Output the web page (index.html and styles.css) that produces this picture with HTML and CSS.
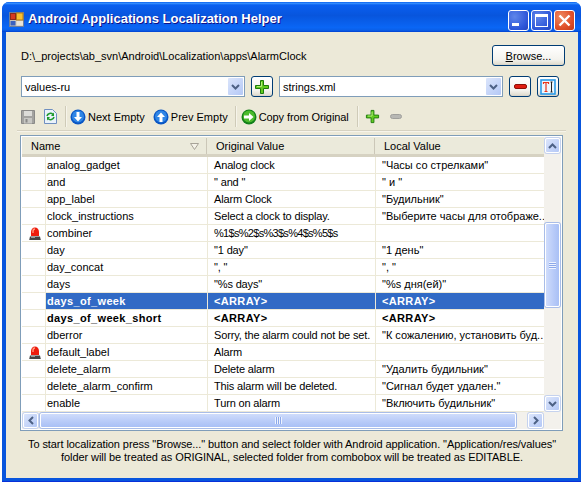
FILE: index.html
```html
<!DOCTYPE html>
<html lang="en">
<head>
    <meta charset="UTF-8" />
    <meta name="viewport" content="width=device-width, initial-scale=1" />
    <title>Android Applications Localization Helper</title>
    <link rel="stylesheet" href="styles.css">
</head>
<body>
    <svg class="defs" width="0" height="0">
        <defs>
            <symbol id="plus" viewBox="0 0 16 16">
                <path d="M6.500 1.500h3v5h5v3h-5v5h-3v-5h-5v-3h5z" fill="#62cc20" stroke="#1d7a0c"/>
                <path d="M7.500 3v4.500H3" fill="none" stroke="#b5ee7c"/>
            </symbol>
            <symbol id="beacon" viewBox="0 0 12 13">
                <path d="M2 9V5a4 4.500 0 0 1 8 0v4z" fill="#ee1c0c"/>
                <path d="M4 6V4.500a2 2.500 0 0 1 2-2.500" fill="none" stroke="#ff9a80" stroke-width="1.400"/>
                <path d="M1 9.500h10l.8 3.500H.2z" fill="#444"/>
                <path d="M2 10.500h4" stroke="#999"/>
            </symbol>
            <symbol id="arrow-down" viewBox="0 0 16 16">
                <circle cx="8" cy="8" r="7.500" fill="#0a56c4"/>
                <circle cx="8" cy="7.500" r="6" fill="#2f86e6"/>
                <path d="M6.500 3h3v5h2.500L8 12.500 4 8h2.500z" fill="#fff"/>
            </symbol>
            <symbol id="arrow-up" viewBox="0 0 16 16">
                <circle cx="8" cy="8" r="7.500" fill="#0a56c4"/>
                <circle cx="8" cy="7.500" r="6" fill="#2f86e6"/>
                <path d="M6.500 13h3V8h2.500L8 3.500 4 8h2.500z" fill="#fff"/>
            </symbol>
            <symbol id="arrow-right" viewBox="0 0 16 16">
                <circle cx="8" cy="8" r="7.500" fill="#12801a"/>
                <circle cx="8" cy="7.500" r="6" fill="#4cbb2c"/>
                <path d="M3 6.500h5V4l4.500 4L8 12V9.500H3z" fill="#fff"/>
            </symbol>
        </defs>
    </svg>

    <div class="window">
        <div class="titlebar">
            <svg class="app-icon" width="15" height="15" viewBox="0 0 15 15">
                <rect x="0.500" y="0.500" width="14" height="14" fill="#c8c4b8" stroke="#6d7f9c"/>
                <rect x="1.500" y="1.500" width="5" height="6" fill="#d83a20" stroke="#8e2a18"/>
                <rect x="7.500" y="1" width="6.500" height="7" fill="#f8c030" stroke="#b07a18"/>
                <rect x="1.500" y="9" width="5" height="4.500" fill="#3a62c0"/>
                <rect x="7.500" y="9" width="6.500" height="4.500" fill="#e8e4d8"/>
            </svg>
            <span class="title">Android Applications Localization Helper</span>
            <div class="win-buttons">
                <div class="win-btn"><span class="glyph-min"></span></div>
                <div class="win-btn"><span class="glyph-max"></span></div>
                <div class="win-btn win-close">
                    <svg width="13" height="13" viewBox="0 0 13 13"><path d="M1.500 1.500l10 10M11.500 1.500l-10 10" stroke="#fff" stroke-width="2.400"/></svg>
                </div>
            </div>
        </div>

        <div class="client">
            <div class="path-row">
                <span class="path">D:\_projects\ab_svn\Android\Localization\apps\AlarmClock</span>
                <button class="btn btn-browse"><u>B</u>rowse...</button>
            </div>

            <div class="combo-row">
                <div class="combo combo-left">
                    <span class="combo-text">values-ru</span>
                    <div class="combo-arrow"><svg width="9" height="6" viewBox="0 0 9 6"><path d="M1 1l3.500 3.500L8 1" fill="none" stroke="#4d6185" stroke-width="2"/></svg></div>
                </div>
                <button class="btn btn-icon"><svg width="16" height="16"><use href="#plus"/></svg></button>
                <div class="combo combo-right">
                    <span class="combo-text">strings.xml</span>
                    <div class="combo-arrow"><svg width="9" height="6" viewBox="0 0 9 6"><path d="M1 1l3.500 3.500L8 1" fill="none" stroke="#4d6185" stroke-width="2"/></svg></div>
                </div>
                <button class="btn btn-icon btn-minus">
                    <svg width="13" height="5" viewBox="0 0 13 5"><rect x="0.500" y="0.500" width="12" height="4" rx="1.500" fill="#e01c10" stroke="#8c1008"/></svg>
                </button>
                <button class="btn btn-icon btn-text">
                    <svg width="16" height="16" viewBox="0 0 16 16">
                        <rect x="1" y="1" width="14" height="14" fill="#eaf6ff" stroke="#2a9ae6" stroke-width="1.600"/>
                        <path d="M3 3.500h6M3.500 3v2M8.500 3v2M6 3.500v9M4.500 12.500h3" fill="none" stroke="#ea3418" stroke-width="1.200"/>
                        <path d="M10.500 3h2M10.500 13h2M11.500 3v10" fill="none" stroke="#222"/>
                    </svg>
                </button>
            </div>

            <div class="toolbar">
                <svg class="tool-icon save" width="14" height="14" viewBox="0 0 14 14">
                    <path d="M0.500 0.500h13v13h-13z" fill="#a3a3a0" stroke="#8a8a88"/>
                    <rect x="3" y="1" width="8" height="5" fill="#dcdcd8"/>
                    <rect x="3" y="8" width="8" height="5.500" fill="#c8c8c4"/>
                    <rect x="4.500" y="9" width="2" height="3.500" fill="#8a8a88"/>
                </svg>
                <svg class="tool-icon refresh" width="13" height="15" viewBox="0 0 13 15">
                    <path d="M0.500 0.500h8l4 4v10h-12z" fill="#eaf2fb" stroke="#6f8fc0"/>
                    <path d="M3 7a3.500 3.500 0 0 1 6-1.500M10 8a3.500 3.500 0 0 1-6 1.500" fill="none" stroke="#1f9a2c" stroke-width="1.600"/>
                    <path d="M10 3.500v3.500H7zM3 11.500V8h3z" fill="#1f9a2c"/>
                </svg>
                <span class="tool-sep sep-1"></span>
                <div class="tool-item next"><svg width="16" height="16"><use href="#arrow-down"/></svg><span>Next Empty</span></div>
                <div class="tool-item prev"><svg width="16" height="16"><use href="#arrow-up"/></svg><span>Prev Empty</span></div>
                <span class="tool-sep sep-2"></span>
                <div class="tool-item copy"><svg width="16" height="16"><use href="#arrow-right"/></svg><span>Copy from Original</span></div>
                <span class="tool-sep sep-3"></span>
                <svg class="tool-icon add" width="15" height="15"><use href="#plus"/></svg>
                <svg class="tool-icon remove" width="12" height="5" viewBox="0 0 12 5"><rect x="0.500" y="0.500" width="11" height="4" rx="2" fill="#b8b8b4" stroke="#a0a09c"/></svg>
            </div>

            <div class="list">
                <div class="list-main">
                    <div class="list-view">
                        <div class="list-head">
                            <div class="head-cell head-name">
                                <span>Name</span>
                                <svg width="9" height="7" viewBox="0 0 9 7"><path d="M0.500 0.500h8L4.500 6.500z" fill="#f4f2e8" stroke="#a7a398"/></svg>
                            </div>
                            <div class="head-cell head-orig">Original Value</div>
                            <div class="head-cell head-local">Local Value</div>
                        </div>
                        <table class="rows">
                            <tbody>
                                <tr><td class="c-icon"></td><td class="c-name">analog_gadget</td><td class="c-orig">Analog clock</td><td class="c-local">"Часы со стрелками"</td></tr>
                                <tr><td class="c-icon"></td><td class="c-name">and</td><td class="c-orig">" and "</td><td class="c-local">" и "</td></tr>
                                <tr><td class="c-icon"></td><td class="c-name">app_label</td><td class="c-orig">Alarm Clock</td><td class="c-local">"Будильник"</td></tr>
                                <tr><td class="c-icon"></td><td class="c-name">clock_instructions</td><td class="c-orig">Select a clock to display.</td><td class="c-local">"Выберите часы для отображе..</td></tr>
                                <tr><td class="c-icon"><svg width="12" height="13"><use href="#beacon"/></svg></td><td class="c-name">combiner</td><td class="c-orig c-tight">%1$s%2$s%3$s%4$s%5$s</td><td class="c-local"></td></tr>
                                <tr><td class="c-icon"></td><td class="c-name">day</td><td class="c-orig">"1 day"</td><td class="c-local">"1 день"</td></tr>
                                <tr><td class="c-icon"></td><td class="c-name">day_concat</td><td class="c-orig">", "</td><td class="c-local">", "</td></tr>
                                <tr><td class="c-icon"></td><td class="c-name">days</td><td class="c-orig">"%s days"</td><td class="c-local">"%s дня(ей)"</td></tr>
                                <tr class="selected"><td class="c-icon"></td><td class="c-name">days_of_week</td><td class="c-orig">&lt;ARRAY&gt;</td><td class="c-local">&lt;ARRAY&gt;</td></tr>
                                <tr class="array"><td class="c-icon"></td><td class="c-name">days_of_week_short</td><td class="c-orig">&lt;ARRAY&gt;</td><td class="c-local">&lt;ARRAY&gt;</td></tr>
                                <tr><td class="c-icon"></td><td class="c-name">dberror</td><td class="c-orig">Sorry, the alarm could not be set.</td><td class="c-local">"К сожалению, установить буд..</td></tr>
                                <tr><td class="c-icon"><svg width="12" height="13"><use href="#beacon"/></svg></td><td class="c-name">default_label</td><td class="c-orig">Alarm</td><td class="c-local"></td></tr>
                                <tr><td class="c-icon"></td><td class="c-name">delete_alarm</td><td class="c-orig">Delete alarm</td><td class="c-local">"Удалить будильник"</td></tr>
                                <tr><td class="c-icon"></td><td class="c-name">delete_alarm_confirm</td><td class="c-orig">This alarm will be deleted.</td><td class="c-local">"Сигнал будет удален."</td></tr>
                                <tr><td class="c-icon"></td><td class="c-name">enable</td><td class="c-orig">Turn on alarm</td><td class="c-local">"Включить будильник"</td></tr>
                            </tbody>
                        </table>
                    </div>
                    <div class="vscroll">
                        <div class="sb-btn"><svg width="9" height="6" viewBox="0 0 9 6"><path d="M1 5l3.500-3.500L8 5" fill="none" stroke="#4d6185" stroke-width="2"/></svg></div>
                        <div class="v-track">
                            <div class="v-thumb"><span class="grip-v"></span></div>
                        </div>
                        <div class="sb-btn"><svg width="9" height="6" viewBox="0 0 9 6"><path d="M1 1l3.500 3.500L8 1" fill="none" stroke="#4d6185" stroke-width="2"/></svg></div>
                    </div>
                </div>
                <div class="hscroll">
                    <div class="sb-btn"><svg width="6" height="9" viewBox="0 0 6 9"><path d="M5 1L1.500 4.500 5 8" fill="none" stroke="#4d6185" stroke-width="2"/></svg></div>
                    <div class="h-thumb"><span class="grip-h"></span></div>
                    <div class="sb-btn"><svg width="6" height="9" viewBox="0 0 6 9"><path d="M1 1l3.500 3.500L1 8" fill="none" stroke="#4d6185" stroke-width="2"/></svg></div>
                </div>
            </div>

            <p class="hint">To start localization press "Browse..." button and select folder with Android application. "Application/res/values"<br>folder will be treated as ORIGINAL, selected folder from combobox will be treated as EDITABLE.</p>
        </div>
    </div>
</body>
</html>
```

FILE: styles.css
```css
html, body {
    margin: 0;
    background-color: #fff;
}
body {
    padding: 2px 0 0 2px;
    font-family: "Liberation Sans", Arial, sans-serif;
    font-size: 11px;
    color: #000;
}
.defs {
    display: block;
    height: 0;
}

/* window frame */
.window {
    width: 579px;
    height: 480px;
    box-sizing: border-box;
    display: flex;
    flex-direction: column;
    background-color: #0855dd;
    border-radius: 7px 7px 0 0;
    border-bottom: 1px solid #0831d9;
}
.titlebar {
    height: 30px;
    flex: none;
    display: flex;
    align-items: center;
    padding: 0 6px 0 7px;
    border-radius: 7px 7px 0 0;
    background: linear-gradient(#0058ee 0, #3a93ff 4%, #0a5ff0 10%, #0855dd 45%, #0a66f5 85%, #0a5fe8 94%, #0040d0 100%);
}
.app-icon {
    margin-top: 4px;
}
.title {
    margin: 3px 0 0 4px;
    font-size: 13px;
    font-weight: bold;
    color: #fff;
    text-shadow: 1px 1px 0 #0f1089;
}
.win-buttons {
    margin-left: auto;
    margin-top: 6px;
    display: flex;
    gap: 2px;
}
.win-btn {
    width: 19px;
    height: 19px;
    display: flex;
    align-items: center;
    justify-content: center;
    border: 1px solid #fff;
    border-radius: 3px;
    background: radial-gradient(circle at 30% 30%, #5f86ea, #2c55d8 70%, #2746b8);
}
.win-close {
    background: radial-gradient(circle at 30% 30%, #ee8a60, #e0502a 60%, #c23a18);
}
.glyph-min {
    width: 7px;
    height: 3px;
    background-color: #fff;
    margin: 9px 6px 0 0;
}
.glyph-max {
    width: 11px;
    height: 9px;
    border: 1px solid #fff;
    border-top-width: 3px;
}
.client {
    flex: 1;
    margin: 0 3px 3px 4px;
    background-color: #ece9d8;
    display: flex;
    flex-direction: column;
    align-items: flex-start;
}

/* buttons */
.btn {
    box-sizing: border-box;
    padding: 0;
    font: inherit;
    color: #000;
    border: 1px solid #003c74;
    border-radius: 3px;
    background: linear-gradient(#fff, #f4f3ee 70%, #e3e0d4 92%, #d6d0c5);
    display: flex;
    align-items: center;
    justify-content: center;
}
.btn-browse {
    width: 73px;
    height: 21px;
    margin-left: auto;
}
.btn-icon {
    width: 22px;
    height: 21px;
}

/* path and combo rows */
.path-row {
    width: 544px;
    margin: 13px 0 0 15px;
    display: flex;
    align-items: center;
}
.path {
    font-size: 11px;
}
.combo-row {
    margin: 10px 0 0 15px;
    display: flex;
    align-items: stretch;
    height: 21px;
}
.combo {
    box-sizing: border-box;
    height: 21px;
    border: 1px solid #7f9db9;
    background-color: #fff;
    display: flex;
    align-items: center;
    padding: 1px;
}
.combo-left {
    width: 224px;
    margin-right: 6px;
}
.combo-right {
    width: 224px;
    margin: 0 6px;
}
.combo-text {
    flex: 1;
    padding-left: 2px;
    font-size: 11px;
}
.combo-arrow {
    width: 15px;
    height: 17px;
    display: flex;
    align-items: center;
    justify-content: center;
    border-radius: 1px;
    background: linear-gradient(135deg, #dbe5fb, #b4c8f6);
}
.btn-text {
    margin-left: 6px;
}

/* toolbar */
.toolbar {
    box-sizing: border-box;
    width: 549px;
    height: 26px;
    margin: 8px 0 0 11px;
    padding-bottom: 2px;
    display: flex;
    align-items: center;
    border-bottom: 1px solid #d6d2c2;
    box-shadow: 0 1px 0 #f6f4ea;
}
.tool-item {
    display: flex;
    align-items: center;
    gap: 2px;
}
.tool-icon {
    flex: none;
}
.tool-sep {
    width: 1px;
    height: 21px;
    background-color: #cfcbb8;
    box-shadow: 1px 0 0 #f6f4ea;
}
.save {
    margin-left: 4px;
}
.refresh {
    margin-left: 9px;
}
.sep-1 {
    margin-left: 8px;
}
.next {
    margin-left: 4px;
}
.prev {
    margin-left: 8px;
}
.sep-2 {
    margin-left: 7px;
}
.copy {
    margin-left: 5px;
    letter-spacing: -0.1px;
}
.sep-3 {
    margin-left: 8px;
}
.add {
    margin-left: 7px;
}
.remove {
    margin-left: 10px;
}

/* list view */
.list {
    box-sizing: border-box;
    width: 543px;
    height: 296px;
    margin: 4px 0 0 14px;
    border: 1px solid #7f9db9;
    padding: 1px;
    background-color: #fff;
    display: flex;
    flex-direction: column;
}
.list-main {
    flex: 1;
    display: flex;
    min-height: 0;
}
.list-view {
    width: 522px;
    overflow: hidden;
}
.list-head {
    display: flex;
    height: 20px;
    box-sizing: border-box;
    background-color: #ebeadb;
    border-bottom: 3px solid #d6d2c2;
}
.head-cell {
    box-sizing: border-box;
    display: flex;
    align-items: center;
    border-right: 1px solid #cbc7b8;
    margin: 1px 0 0;
}
.head-name {
    width: 185px;
    padding: 0 7px 0 9px;
    justify-content: space-between;
}
.head-orig {
    width: 168px;
    padding-left: 9px;
}
.head-local {
    width: 169px;
    padding-left: 9px;
    border-right: none;
}
.rows {
    border-collapse: collapse;
    table-layout: fixed;
    width: 522px;
}
.rows td {
    height: 16px;
    padding: 0;
    border-bottom: 1px solid #ece9d8;
    border-right: 1px solid #ece9d8;
    white-space: nowrap;
    overflow: hidden;
    line-height: 16px;
}
.rows td:last-child {
    border-right: none;
}
.c-icon {
    width: 23px;
    vertical-align: middle;
}
.c-icon svg {
    display: block;
    margin: 1px 0 0 7px;
}
.c-name {
    width: 162px;
    padding-left: 1px !important;
    box-sizing: border-box;
}
.c-orig {
    width: 168px;
    padding-left: 6px !important;
    box-sizing: border-box;
    letter-spacing: -0.15px;
}
.c-tight {
    letter-spacing: -0.7px;
}
.c-local {
    padding-left: 6px !important;
}
.selected .c-name,
.selected .c-orig,
.selected .c-local {
    background-color: #316ac5;
    color: #fff;
    font-weight: bold;
    letter-spacing: 0.35px;
}
.array td {
    font-weight: bold;
    letter-spacing: 0.35px;
}

/* scrollbars */
.vscroll {
    width: 17px;
    flex: none;
    display: flex;
    flex-direction: column;
    background-color: #f3f1ec;
}
.sb-btn {
    box-sizing: border-box;
    width: 15px;
    height: 15px;
    flex: none;
    margin: 1px;
    display: flex;
    align-items: center;
    justify-content: center;
    border: 1px solid #fff;
    border-radius: 2px;
    background: linear-gradient(135deg, #dbe5fb, #b4c8f6);
    box-shadow: 0 0 0 1px #c5d2ee;
}
.v-track {
    flex: 1;
    padding-top: 69px;
}
.v-thumb {
    box-sizing: border-box;
    width: 15px;
    height: 84px;
    margin-left: 1px;
    display: flex;
    align-items: center;
    justify-content: center;
    border: 1px solid #fff;
    border-radius: 2px;
    background: linear-gradient(90deg, #cfdcfb, #b7caf8 60%, #a9c0f5);
    box-shadow: 0 0 0 1px #a9bde8;
}
.grip-v {
    width: 7px;
    height: 7px;
    background: repeating-linear-gradient(#eef3fe 0 1px, #8ca8ea 1px 2px);
}
.hscroll {
    height: 17px;
    flex: none;
    display: flex;
    align-items: center;
    background-color: #f3f1ec;
}
.h-thumb {
    box-sizing: border-box;
    width: 476px;
    height: 15px;
    margin-left: 1px;
    display: flex;
    align-items: center;
    justify-content: center;
    border: 1px solid #fff;
    border-radius: 2px;
    background: linear-gradient(#cfdcfb, #b7caf8 60%, #a9c0f5);
    box-shadow: 0 0 0 1px #a9bde8;
}
.grip-h {
    width: 7px;
    height: 7px;
    background: repeating-linear-gradient(90deg, #eef3fe 0 1px, #8ca8ea 1px 2px);
}
.h-thumb + .sb-btn {
    margin-left: 12px;
}

/* footer hint */
.hint {
    width: 100%;
    margin: 7px 0 0;
    text-align: center;
    line-height: 13px;
    font-size: 11px;
    letter-spacing: -0.08px;
}
```
